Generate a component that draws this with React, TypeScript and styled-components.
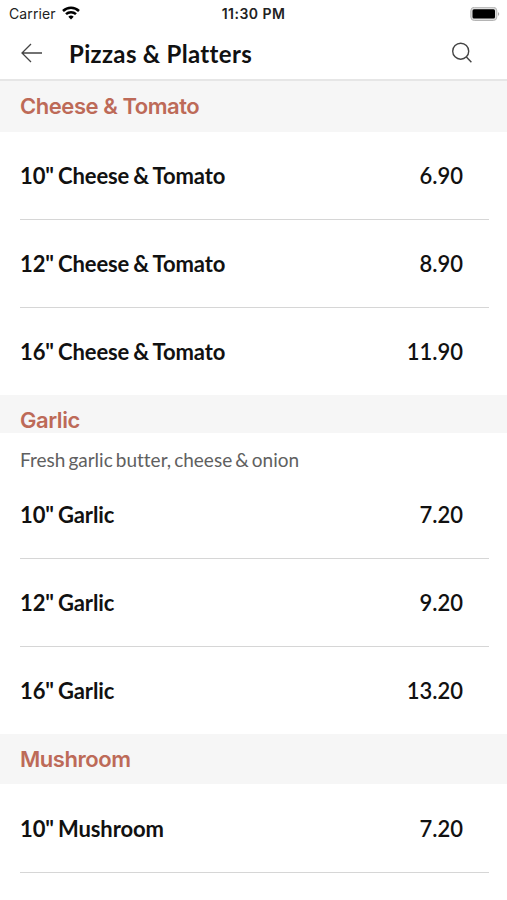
import React from 'react';
import styled, { createGlobalStyle } from 'styled-components';

const Global = createGlobalStyle`
  * { box-sizing: border-box; }
  body { margin: 0; background: #fff; font-family: Lato, sans-serif; color: #111; font-variant-ligatures: none; }
`;
const Screen = styled.main`
  width: 507px; height: 900px; overflow: hidden; background: #fff;
`;
const StatusBar = styled.div`
  height: 27px; display: grid; grid-template-columns: 1fr auto 1fr; align-items: center;
  padding: 0 7px 0 9px; font: 14px/27px Inter, sans-serif; color: #222;
`;
const Carrier = styled.div`
  display: flex; align-items: center; gap: 6px; letter-spacing: 0.1px;
  svg { margin-bottom: 2px; }
`;
const Clock = styled.div`font-weight: 600; font-size: 14px; letter-spacing: 0.45px; margin-right: 2px;`;
const Battery = styled.div`display: flex; justify-content: flex-end;`;
const Header = styled.header`
  height: 54px; display: flex; align-items: center; padding: 0 34px 0 20px;
  border-bottom: 2px solid #e6e6e6;
`;
const Title = styled.h1`
  margin: 1px auto 0 25px; font: 700 24px/30px Lato, sans-serif;
  letter-spacing: 0.35px; word-spacing: -0.2px;
`;
const SectionTitle = styled.h2<{ $height: number }>`
  margin: 0; height: ${p => p.$height}px; padding: 0 20px; background: #f6f6f6;
  color: #bd6a58; font: 600 22px/50px Inter, sans-serif; letter-spacing: -0.45px;
`;
const Note = styled.p`
  margin: 0; height: 38px; padding: 0 20px; font-size: 19px; line-height: 54px;
  color: #606060; word-spacing: -1.8px;
`;
const Row = styled.div<{ $height: number; $divided: boolean }>`
  height: ${p => p.$height}px; margin: 0 18px 0 20px; padding: 1px 26px 0 0; display: flex;
  justify-content: space-between; align-items: center; font-size: 22px; line-height: 28px;
  border-bottom: ${p => (p.$divided ? '1px solid #d6d6d6' : '0')};
`;
const Name = styled.span`font-weight: 700; word-spacing: -1.2px; letter-spacing: -0.1px;`;
const Price = styled.span`font-family: 'Lato Semibold', Lato, sans-serif; font-weight: 600;`;

const sections = [
  { name: 'Cheese & Tomato', height: 51, rowHeight: 88, endsOpen: true, note: '', items: [['10" Cheese & Tomato', '6.90'], ['12" Cheese & Tomato', '8.90'], ['16" Cheese & Tomato', '11.90']] },
  { name: 'Garlic', height: 38, rowHeight: 88, endsOpen: true, note: 'Fresh garlic butter, cheese & onion', items: [['10" Garlic', '7.20'], ['12" Garlic', '9.20'], ['16" Garlic', '13.20']] },
  { name: 'Mushroom', height: 50, rowHeight: 89, endsOpen: false, note: '', items: [['10" Mushroom', '7.20']] },
];

export default function App() {
  return (
    <Screen>
      <Global />
      <StatusBar>
        <Carrier>Carrier
          <svg width="18" height="14" viewBox="0 0 18 14" fill="none" stroke="#000" strokeWidth="2.5">
            <path d="M1 5a11.5 11.5 0 0 1 16 0M4 8.2a7.2 7.2 0 0 1 10 0" /><path d="M9 13.5 6.3 10.7a4 4 0 0 1 5.4 0Z" fill="#000" stroke="none" />
          </svg>
        </Carrier>
        <Clock>11:30 PM</Clock>
        <Battery>
          <svg width="30" height="14" viewBox="0 0 30 14"><rect x=".8" y=".3" width="26" height="13.2" rx="3.5" fill="#ddd" stroke="#b4b4b4" /><rect x="2.5" y="2.3" width="22.5" height="9.2" rx="1.5" /><path d="M28 5q2.5 2 0 4Z" fill="#aaa" /></svg>
        </Battery>
      </StatusBar>
      <Header>
        <svg width="24" height="24" viewBox="0 0 24 24" fill="none" stroke="#444" strokeWidth="1.3"><path d="M22 12H2M11 3 2 12l9 9" /></svg>
        <Title>Pizzas &amp; Platters</Title>
        <svg width="22" height="22" viewBox="0 0 22 22" fill="none" stroke="#444" strokeWidth="1.4"><circle cx="9.7" cy="9.2" r="8" /><path d="m15.4 15 5 5.2" /></svg>
      </Header>
      {sections.map(s => (
        <section key={s.name}>
          <SectionTitle $height={s.height}>{s.name}</SectionTitle>
          {s.note && <Note>{s.note}</Note>}
          {s.items.map(([name, price], i) => {
            const open = s.endsOpen && i === s.items.length - 1;
            return (
              <Row key={name} $height={open ? s.rowHeight - 1 : s.rowHeight} $divided={!open}>
                <Name>{name}</Name><Price>{price}</Price>
              </Row>
            );
          })}
        </section>
      ))}
    </Screen>
  );
}
